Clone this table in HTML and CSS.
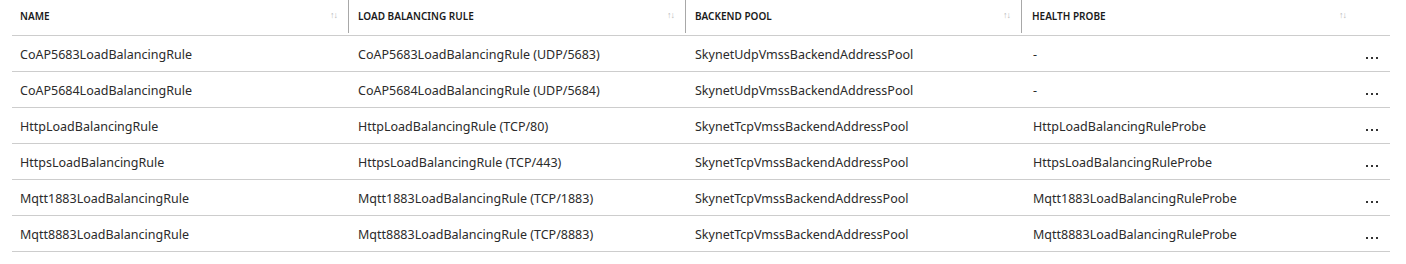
FILE: index.html
```html
<!DOCTYPE html>
<html lang="en">
<head>
    <meta charset="UTF-8">
    <title>Load balancing rules</title>
    <link rel="stylesheet" href="styles.css">
</head>
<body>
    <div class="grid">
        <div class="row head">
            <div class="cell">NAME<span class="sort">&#8593;&#8595;</span></div>
            <div class="cell split">LOAD BALANCING RULE<span class="sort">&#8593;&#8595;</span></div>
            <div class="cell split">BACKEND POOL<span class="sort">&#8593;&#8595;</span></div>
            <div class="cell split">HEALTH PROBE<span class="sort">&#8593;&#8595;</span></div>
            <div class="cell"></div>
        </div>
        <div class="row">
            <div class="cell">CoAP5683LoadBalancingRule</div>
            <div class="cell">CoAP5683LoadBalancingRule (UDP/5683)</div>
            <div class="cell">SkynetUdpVmssBackendAddressPool</div>
            <div class="cell">-</div>
            <div class="cell more"><span></span><span></span><span></span></div>
        </div>
        <div class="row">
            <div class="cell">CoAP5684LoadBalancingRule</div>
            <div class="cell">CoAP5684LoadBalancingRule (UDP/5684)</div>
            <div class="cell">SkynetUdpVmssBackendAddressPool</div>
            <div class="cell">-</div>
            <div class="cell more"><span></span><span></span><span></span></div>
        </div>
        <div class="row">
            <div class="cell">HttpLoadBalancingRule</div>
            <div class="cell">HttpLoadBalancingRule (TCP/80)</div>
            <div class="cell">SkynetTcpVmssBackendAddressPool</div>
            <div class="cell">HttpLoadBalancingRuleProbe</div>
            <div class="cell more"><span></span><span></span><span></span></div>
        </div>
        <div class="row">
            <div class="cell">HttpsLoadBalancingRule</div>
            <div class="cell">HttpsLoadBalancingRule (TCP/443)</div>
            <div class="cell">SkynetTcpVmssBackendAddressPool</div>
            <div class="cell">HttpsLoadBalancingRuleProbe</div>
            <div class="cell more"><span></span><span></span><span></span></div>
        </div>
        <div class="row">
            <div class="cell">Mqtt1883LoadBalancingRule</div>
            <div class="cell">Mqtt1883LoadBalancingRule (TCP/1883)</div>
            <div class="cell">SkynetTcpVmssBackendAddressPool</div>
            <div class="cell">Mqtt1883LoadBalancingRuleProbe</div>
            <div class="cell more"><span></span><span></span><span></span></div>
        </div>
        <div class="row">
            <div class="cell">Mqtt8883LoadBalancingRule</div>
            <div class="cell">Mqtt8883LoadBalancingRule (TCP/8883)</div>
            <div class="cell">SkynetTcpVmssBackendAddressPool</div>
            <div class="cell">Mqtt8883LoadBalancingRuleProbe</div>
            <div class="cell more"><span></span><span></span><span></span></div>
        </div>
    </div>
</body>
</html>
```

FILE: styles.css
```css
* {
    margin: 0;
    padding: 0;
    box-sizing: border-box;
}

body {
    font-family: "Noto Sans", "Open Sans", sans-serif;
    font-size: 12.5px;
    color: #2b2b2b;
    background: #fff;
}

.grid {
    width: 1378px;
    margin-left: 12px;
}

.row {
    display: grid;
    grid-template-columns: 336px 337px 336px 336px 33px;
    height: 36px;
    border-bottom: 1px solid #cdcdcd;
}

.cell {
    display: flex;
    align-items: center;
    padding-left: 10px;
    padding-top: 2px;
    white-space: nowrap;
}

.cell:first-child {
    padding-left: 8px;
}

.cell:nth-child(4) {
    padding-left: 12px;
}

.head .cell {
    font-size: 10px;
    font-weight: 600;
    color: #1a1a1a;
    justify-content: space-between;
    padding-top: 0;
    padding-right: 11px;
    padding-bottom: 3px;
}

.head .split {
    border-left: 1px solid #a8a8a8;
    padding-left: 9px;
    margin-bottom: 2px;
    padding-bottom: 1px;
}

.head .cell:nth-child(4) {
    padding-left: 10px;
}

.sort {
    font-size: 9px;
    font-weight: 400;
    color: #b8b8b8;
    letter-spacing: -1px;
    margin-top: -4px;
}

.more {
    padding-left: 9px;
    padding-top: 9px;
    gap: 3px;
}

.more span {
    width: 2px;
    height: 2px;
    background: #333;
}
```
